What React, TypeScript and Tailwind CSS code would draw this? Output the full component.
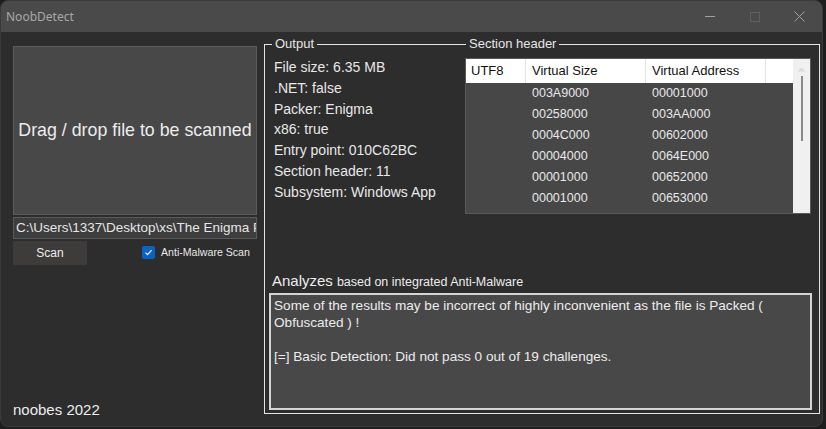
import React from "react";

const outputLines = [
    "File size: 6.35 MB",
    ".NET: false",
    "Packer: Enigma",
    "x86: true",
    "Entry point: 010C62BC",
    "Section header: 11",
    "Subsystem: Windows App",
];

const sections = [
    { size: "003A9000", addr: "00001000" },
    { size: "00258000", addr: "003AA000" },
    { size: "0004C000", addr: "00602000" },
    { size: "00004000", addr: "0064E000" },
    { size: "00001000", addr: "00652000" },
    { size: "00001000", addr: "00653000" },
];

const font = { fontFamily: '"Liberation Sans", Arial, sans-serif' };

export default function App() {
    return (
        <div className="w-[826px] h-[429px] bg-[#1e1e1e] overflow-hidden" style={font}>
            <div className="w-[823px] h-[427px] rounded-lg overflow-hidden bg-[#2d2d2d] border border-[#3a3a3a] flex flex-col">
                {/* title bar */}
                <div className="h-[31px] shrink-0 bg-[#4a4a4a] flex items-center pl-[5px]">
                    <span className="text-[12px] text-[#a8a8a8]" style={{ fontFamily: '"Noto Sans", sans-serif' }}>NoobDetect</span>
                    <div className="ml-auto flex items-center h-full">
                        <div className="w-[45px] h-full flex items-center justify-center">
                            <div className="w-[10px] h-px bg-[#a0a0a0]" />
                        </div>
                        <div className="w-[45px] h-full flex items-center justify-center">
                            <div className="w-[10px] h-[10px] border border-[#5f5f5f]" />
                        </div>
                        <div className="w-[45px] h-full flex items-center justify-center">
                            <svg width="11" height="11" viewBox="0 0 11 11">
                                <path d="M0.5 0.5 L10.5 10.5 M10.5 0.5 L0.5 10.5" stroke="#a0a0a0" strokeWidth="1" />
                            </svg>
                        </div>
                    </div>
                </div>

                <div className="flex flex-1">
                    {/* left column */}
                    <div className="w-[244px] ml-[12px] pt-[14px] flex flex-col">
                        <div className="h-[169px] bg-[#484848] border border-[#5c5c5c] flex items-center justify-center">
                            <span className="text-[17.8px] text-[#ececec] whitespace-nowrap">Drag / drop file to be scanned</span>
                        </div>
                        <div className="mt-[2px] h-[22px] bg-[#3d3d3d] border border-[#5a5a5a] flex items-center px-[2px] overflow-hidden">
                            <span className="text-[13.5px] text-[#e6e6e6] whitespace-nowrap">C:\Users\1337\Desktop\xs\The Enigma Protector</span>
                        </div>
                        <div className="mt-[2px] flex items-center">
                            <div className="w-[74px] h-[24px] bg-[#3e3c3a] flex items-center justify-center text-[12px] text-[#ececec]">Scan</div>
                            <div className="ml-[55px] flex items-center">
                                <div className="w-[13px] h-[13px] rounded-[2px] bg-[#0a63c4] flex items-center justify-center">
                                    <svg width="9" height="9" viewBox="0 0 9 9">
                                        <path d="M1.5 4.6 L3.6 6.6 L7.6 2.2" stroke="#ffffff" strokeWidth="1.1" fill="none" />
                                    </svg>
                                </div>
                                <span className="ml-[6px] text-[10.6px] text-[#e8e8e8] whitespace-nowrap">Anti-Malware Scan</span>
                            </div>
                        </div>
                        <div className="mt-auto mb-[5px] text-[15px] text-[#ececec]">noobes 2022</div>
                    </div>

                    {/* right frame */}
                    <div className="ml-[7px] mt-[12px] w-[556px] h-[370px] border border-[#e4e4e4] relative">
                        <span className="absolute left-[7px] -top-[9px] px-[3px] bg-[#2d2d2d] text-[13px] leading-[16px] text-[#e6e6e6]">Output</span>
                        <span className="absolute left-[201px] -top-[9px] px-[3px] bg-[#2d2d2d] text-[13px] leading-[16px] text-[#e6e6e6]">Section header</span>

                        <div className="flex pt-[13px]">
                            <div className="w-[200px] pl-[9px] -mt-[1px] flex flex-col">
                                {outputLines.map((l) => (
                                    <div key={l} className="h-[20.8px] flex items-center text-[14px] text-[#e8e8e8] whitespace-nowrap">{l}</div>
                                ))}
                            </div>
                            <div className="w-[346px] h-[156px] bg-[#474747] border border-[#5a5a5a] flex">
                                <div className="flex-1 flex flex-col">
                                    <div className="h-[24px] bg-white flex text-[13px] text-[#111]">
                                        <div className="w-[60px] border-r border-[#e3e3e3] flex items-center pl-[5px]">UTF8</div>
                                        <div className="w-[120px] border-r border-[#e3e3e3] flex items-center pl-[6px]">Virtual Size</div>
                                        <div className="w-[120px] border-r border-[#e3e3e3] flex items-center pl-[6px]">Virtual Address</div>
                                        <div className="flex-1" />
                                    </div>
                                    <div className="flex flex-col">
                                        {sections.map((s, i) => (
                                            <div key={i} className="h-[21px] flex items-center text-[12.5px] text-[#e8e8e8]">
                                                <div className="w-[60px]" />
                                                <div className="w-[120px] pl-[6px]">{s.size}</div>
                                                <div className="w-[120px] pl-[6px]">{s.addr}</div>
                                            </div>
                                        ))}
                                    </div>
                                </div>
                                <div className="w-[17px] bg-[#f0f0f0] flex flex-col items-center">
                                    <svg width="9" height="6" viewBox="0 0 9 6" className="mt-[7px]">
                                        <path d="M0.5 5.5 L4.5 1.5 L8.5 5.5 Z" fill="#dadada" />
                                    </svg>
                                    <div className="mt-[4px] w-[2px] h-[65px] bg-[#8a8a8a]" />
                                </div>
                            </div>
                        </div>

                        <div className="mt-[58px] pl-[7px] flex items-end gap-[4px]">
                            <span className="text-[15px] leading-[18px] text-[#ececec]">Analyzes</span>
                            <span className="text-[12.5px] leading-[16px] text-[#ececec]">based on integrated Anti-Malware</span>
                        </div>
                        <div className="ml-[4px] mt-[3px] w-[543px] h-[117px] bg-[#484848] border-2 border-[#d4d4d4] px-[3px] pt-[2px] text-[13.6px] leading-[17px] text-[#ececec]">
                            <p>Some of the results may be incorrect of highly inconvenient as the file is Packed (</p>
                            <p>Obfuscated ) !</p>
                            <p>&nbsp;</p>
                            <p>[=] Basic Detection: Did not pass 0 out of 19 challenges.</p>
                        </div>
                    </div>
                </div>
            </div>
        </div>
    );
}
